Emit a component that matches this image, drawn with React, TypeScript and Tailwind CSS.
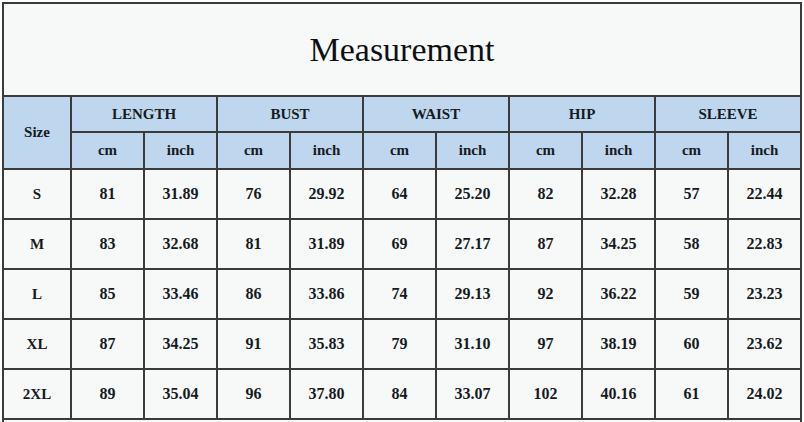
const groups = ['LENGTH', 'BUST', 'WAIST', 'HIP', 'SLEEVE']

const rows: [string, ...string[]][] = [
  ['S', '81', '31.89', '76', '29.92', '64', '25.20', '82', '32.28', '57', '22.44'],
  ['M', '83', '32.68', '81', '31.89', '69', '27.17', '87', '34.25', '58', '22.83'],
  ['L', '85', '33.46', '86', '33.86', '74', '29.13', '92', '36.22', '59', '23.23'],
  ['XL', '87', '34.25', '91', '35.83', '79', '31.10', '97', '38.19', '60', '23.62'],
  ['2XL', '89', '35.04', '96', '37.80', '84', '33.07', '102', '40.16', '61', '24.02'],
]

const cell = 'border-2 border-[#3b3b3b] text-center align-middle p-0'

export default function App() {
  return (
    <div className="w-[804px] h-[422px] overflow-hidden bg-white pl-[2px] pt-[2px] text-[#161a22]" style={{ fontFamily: '"Liberation Serif", "Times New Roman", serif' }}>
      <table className="w-[800px] table-fixed border-collapse bg-[#f7f9f9]">
        <colgroup>
          <col className="w-[68px]" />
          {Array.from({ length: 10 }).map((_, i) => (
            <col key={i} />
          ))}
        </colgroup>
        <tbody>
          <tr className="h-[93px]">
            <td colSpan={11} className={`${cell} text-[34px] font-normal text-[#0d0f14]`}>
              Measurement
            </td>
          </tr>
          <tr className="h-[36px] bg-[#bed7ee]">
            <td rowSpan={2} className={`${cell} text-[15px] font-bold`}>Size</td>
            {groups.map(g => (
              <td key={g} colSpan={2} className={`${cell} text-[15px] font-bold`}>{g}</td>
            ))}
          </tr>
          <tr className="h-[37px] bg-[#bed7ee]">
            {groups.map(g => (
              <>
                <td key={g + 'cm'} className={`${cell} text-[15px] font-bold`}>cm</td>
                <td key={g + 'in'} className={`${cell} text-[15px] font-bold`}>inch</td>
              </>
            ))}
          </tr>
          {rows.map(r => (
            <tr key={r[0]} className="h-[50px]">
              {r.map((v, i) => (
                <td key={i} className={`${cell} font-bold ${i === 0 ? 'text-[15px]' : 'text-[16px]'}`}>{v}</td>
              ))}
            </tr>
          ))}
          <tr className="h-[30px]">
            <td colSpan={11} className={cell}></td>
          </tr>
        </tbody>
      </table>
    </div>
  )
}
